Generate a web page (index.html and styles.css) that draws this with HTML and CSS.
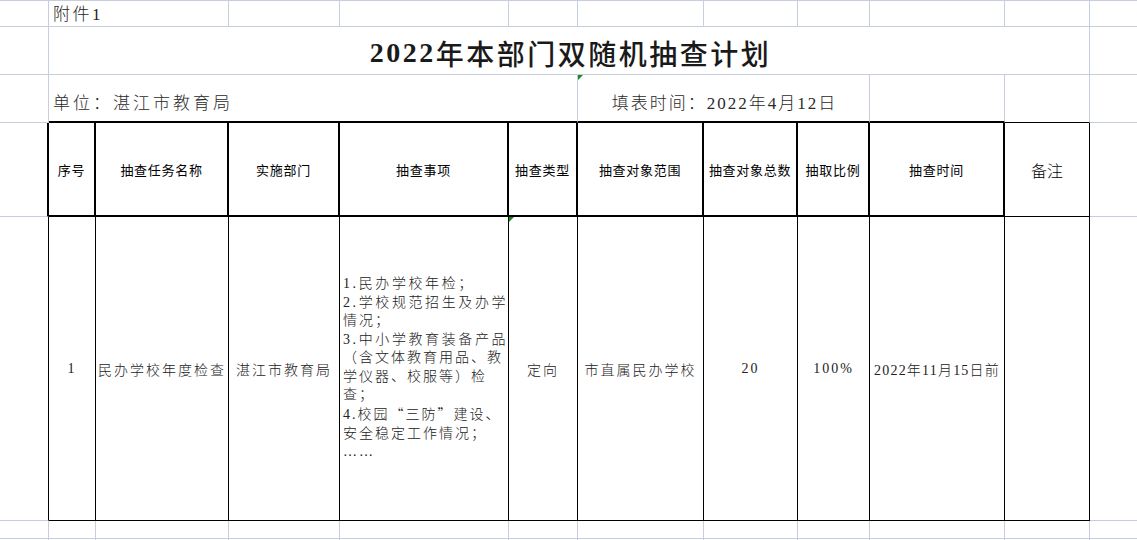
FILE: index.html
```html
<!DOCTYPE html>
<html lang="zh-CN">
<head>
<meta charset="utf-8">
<title>2022年本部门双随机抽查计划</title>
<link rel="stylesheet" href="styles.css">
</head>
<body>
<div class="sheet">
  <!-- row 1 -->
  <div class="c"></div>
  <div class="c span2 attach">附件1</div>
  <div class="c"></div>
  <div class="c"></div>
  <div class="c"></div>
  <div class="c"></div>
  <div class="c"></div>
  <div class="c"></div>
  <div class="c"></div>
  <div class="c"></div>
  <div class="c edge"></div>

  <!-- row 2 -->
  <div class="c"></div>
  <div class="c span10 title"><span class="num">2022</span>年本部门双随机抽查计划</div>
  <div class="c edge"></div>

  <!-- row 3 -->
  <div class="c"></div>
  <div class="c span5 unit above-thick">单位：湛江市教育局</div>
  <div class="c span3 filldate above-thick flag">填表时间：2022年4月12日</div>
  <div class="c above-thick"></div>
  <div class="c above-thin"></div>
  <div class="c edge"></div>

  <!-- row 4: header -->
  <div class="c left-thick"></div>
  <div class="c th">序号</div>
  <div class="c th">抽查任务名称</div>
  <div class="c th">实施部门</div>
  <div class="c th">抽查事项</div>
  <div class="c th">抽查类型</div>
  <div class="c th">抽查对象范围</div>
  <div class="c th">抽查对象总数</div>
  <div class="c th">抽取比例</div>
  <div class="c th">抽查时间</div>
  <div class="c th th-note">备注</div>
  <div class="c edge"></div>

  <!-- row 5: body -->
  <div class="c left-thin"></div>
  <div class="c td">1</div>
  <div class="c td">民办学校年度检查</div>
  <div class="c td">湛江市教育局</div>
  <div class="c td items">
    <div class="list">
      <div class="wide">1.民办学校年检；</div>
      <div class="wide">2.学校规范招生及办学</div>
      <div>情况；</div>
      <div class="wide">3.中小学教育装备产品</div>
      <div>（含文体教育用品、教</div>
      <div>学仪器、校服等）检</div>
      <div>查；</div>
      <div>4.校园<span class="cjk">“</span>三防<span class="cjk">”</span>建设、</div>
      <div>安全稳定工作情况；</div>
      <div>……</div>
    </div>
  </div>
  <div class="c td flag">定向</div>
  <div class="c td">市直属民办学校</div>
  <div class="c td">20</div>
  <div class="c td">100%</div>
  <div class="c td tight">2022年11月15日前</div>
  <div class="c td"></div>
  <div class="c edge"></div>

  <!-- row 6 -->
  <div class="c"></div>
  <div class="c"></div>
  <div class="c"></div>
  <div class="c"></div>
  <div class="c"></div>
  <div class="c"></div>
  <div class="c"></div>
  <div class="c"></div>
  <div class="c"></div>
  <div class="c"></div>
  <div class="c"></div>
  <div class="c edge"></div>

  <!-- row 7 -->
  <div class="c tail"></div>
  <div class="c tail"></div>
  <div class="c tail"></div>
  <div class="c tail"></div>
  <div class="c tail"></div>
  <div class="c tail"></div>
  <div class="c tail"></div>
  <div class="c tail"></div>
  <div class="c tail"></div>
  <div class="c tail"></div>
  <div class="c tail"></div>
  <div class="c tail edge"></div>
</div>
</body>
</html>
```

FILE: styles.css
```css
* {
  box-sizing: border-box;
}

html,
body {
  margin: 0;
  padding: 0;
  background: #ffffff;
  overflow: hidden;
}

.sheet {
  display: grid;
  grid-template-columns: 49px 47px 133px 111px 169px 69px 126px 94px 72px 135px 85px 1fr;
  grid-template-rows: 26px 48px 48px 94px 304px 18px 1fr;
  width: 1137px;
  height: 540px;
  border-top: 1px solid #c6cddf;
  font-family: "Liberation Serif", "Noto Sans CJK SC", serif;
  color: #1f1f1f;
}

.c {
  position: relative;
  min-width: 0;
  min-height: 0;
  border-right: 1px solid #c6cddf;
  border-bottom: 1px solid #c6cddf;
}

.edge {
  border-right: none;
}

.tail {
  border-bottom: none;
}

.span2 { grid-column: span 2; }
.span3 { grid-column: span 3; }
.span5 { grid-column: span 5; }
.span10 { grid-column: span 10; }

/* top texts */
.attach {
  display: flex;
  align-items: flex-end;
  padding: 0 0 1px 4px;
  font-size: 17px;
  font-weight: 300;
  line-height: 20px;
  letter-spacing: 2.5px;
  white-space: nowrap;
}

.title {
  display: flex;
  align-items: center;
  justify-content: center;
  padding-top: 4px;
  padding-left: 3px;
  font-size: 28px;
  font-weight: 500;
  letter-spacing: 2.5px;
  color: #1a1a1a;
  white-space: nowrap;
}

.title .num {
  font-weight: 700;
}

.unit,
.filldate {
  display: flex;
  align-items: center;
  padding-top: 6px;
  font-size: 17px;
  font-weight: 300;
  white-space: nowrap;
  color: #2a2a2a;
}

.unit {
  padding-left: 4px;
  letter-spacing: 3px;
}

.filldate {
  justify-content: center;
  padding-left: 2px;
  letter-spacing: 2px;
}

/* table frame */
.above-thick {
  border-bottom: 2px solid #000;
}

.above-thin {
  border-bottom: 1px solid #000;
}

.left-thick {
  border-right: 2px solid #000;
}

.left-thin {
  border-right-color: #000;
}

.th {
  display: flex;
  align-items: center;
  justify-content: center;
  border-right: 2px solid #000;
  border-bottom: 2px solid #000;
  font-family: "Noto Sans CJK SC", sans-serif;
  font-size: 13px;
  letter-spacing: 0.7px;
  color: #000;
  white-space: nowrap;
}

.th-note {
  border-right: 1px solid #000;
  border-bottom: 1px solid #000;
  font-size: 16px;
  font-weight: 300;
  letter-spacing: 0;
}

.td {
  display: flex;
  align-items: center;
  justify-content: center;
  border-right: 1px solid #000;
  border-bottom: 1px solid #000;
  font-size: 14px;
  font-weight: 300;
  letter-spacing: 2px;
  white-space: nowrap;
  color: #222;
}

.td.tight {
  letter-spacing: 1.2px;
}

.items {
  justify-content: flex-start;
  padding-left: 3px;
}

.list {
  line-height: 18.4px;
  font-size: 14px;
  letter-spacing: 2px;
}

.list .wide {
  letter-spacing: 2.6px;
}

.cjk {
  font-family: "Noto Sans CJK SC", sans-serif;
}

/* green comment markers */
.flag::before {
  content: "";
  position: absolute;
  left: 0;
  top: 0;
  border-top: 5px solid #178a17;
  border-right: 5px solid transparent;
}
```
